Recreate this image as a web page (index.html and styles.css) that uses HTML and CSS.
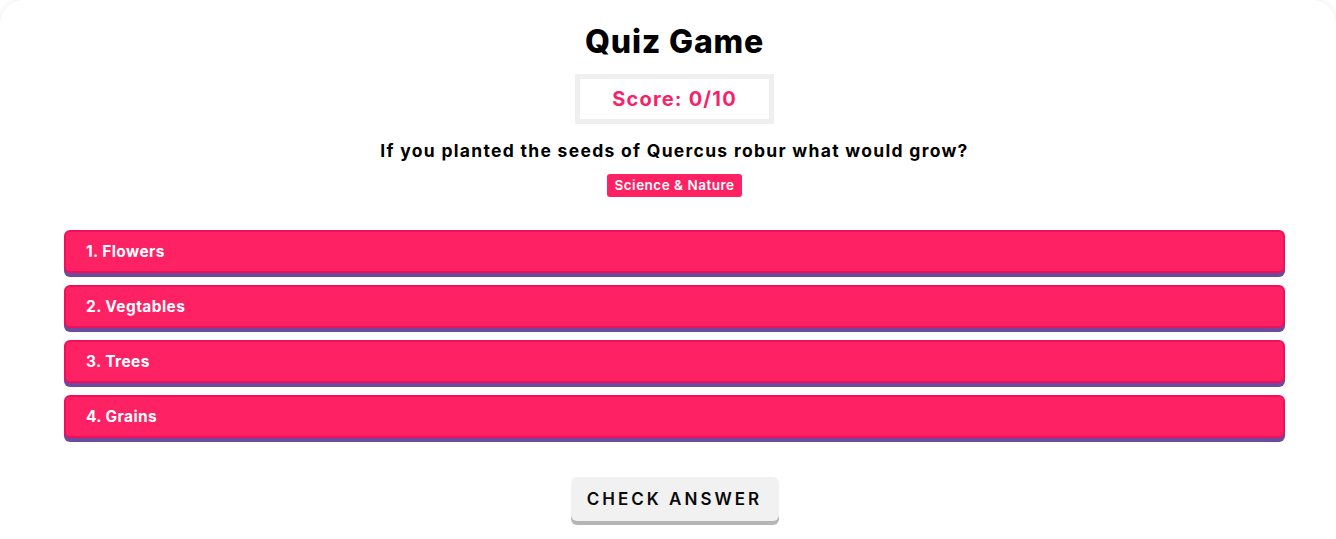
FILE: index.html
```html
<!DOCTYPE html>
<html lang="en">
<head>
<meta charset="utf-8">
<title>Quiz Game</title>
<link rel="stylesheet" href="styles.css">
</head>
<body>
<div class="card">
  <h1 class="title">Quiz Game</h1>
  <div class="score">Score: 0/10</div>
  <p class="question">If you planted the seeds of Quercus robur what would grow?</p>
  <span class="tag">Science &amp; Nature</span>
  <ul class="answers">
    <li class="answer">1. Flowers</li>
    <li class="answer">2. Vegtables</li>
    <li class="answer">3. Trees</li>
    <li class="answer">4. Grains</li>
  </ul>
  <button class="check">Check Answer</button>
</div>
</body>
</html>
```
FILE: styles.css
```css
* { box-sizing: border-box; }
html, body { margin: 0; padding: 0; background: #fff; }
body {
  font-family: Inter, "Open Sans", sans-serif;
  color: #000;
  overflow: hidden;
}
.card {
  background: #fff;
  border-radius: 24px;
  box-shadow: 0 0 6px rgba(0,0,0,0.08);
  padding: 20px 51px 40px 64px;
  display: flex;
  flex-direction: column;
  align-items: center;
  min-height: 539px;
}
.title {
  margin: 0;
  font-size: 32px;
  font-weight: 800;
  line-height: 44px;
  letter-spacing: 0.8px;
}
.score {
  margin-top: 10px;
  width: 199px;
  height: 50px;
  border: 5px solid #efefef;
  display: flex;
  align-items: center;
  justify-content: center;
  color: #f5246a;
  font-weight: 700;
  font-size: 20px;
  letter-spacing: 1.2px;
}
.question {
  margin: 15px 0 0;
  font-size: 17.5px;
  font-weight: 700;
  line-height: 24px;
  letter-spacing: 1.3px;
}
.tag {
  margin-top: 11px;
  background: #fe2164;
  color: #fff;
  font-size: 13.5px;
  font-weight: 600;
  line-height: 23px;
  padding: 0 7px;
  border-radius: 3px;
  letter-spacing: 0.5px;
}
.answers {
  list-style: none;
  margin: 33px 0 0;
  padding: 0;
  width: 100%;
  display: flex;
  flex-direction: column;
  gap: 12px;
}
.answer {
  height: 43px;
  background: #fe2164;
  border: 2px solid #f0105a;
  border-radius: 6px;
  box-shadow: 0 4px 0 #6c4a9e;
  color: #fff;
  font-size: 15.5px;
  font-weight: 700;
  letter-spacing: 0.4px;
  padding: 0 20px;
  display: flex;
  align-items: center;
}
.check {
  margin-top: 39px;
  background: #f1f1f1;
  border: none;
  border-radius: 6px;
  box-shadow: 0 4px 0 #b5b5b5;
  width: 208px;
  height: 44px;
  font-family: inherit;
  font-size: 17px;
  font-weight: 600;
  letter-spacing: 3px;
  text-transform: uppercase;
  color: #0a0a0a;
  cursor: pointer;
}
```
